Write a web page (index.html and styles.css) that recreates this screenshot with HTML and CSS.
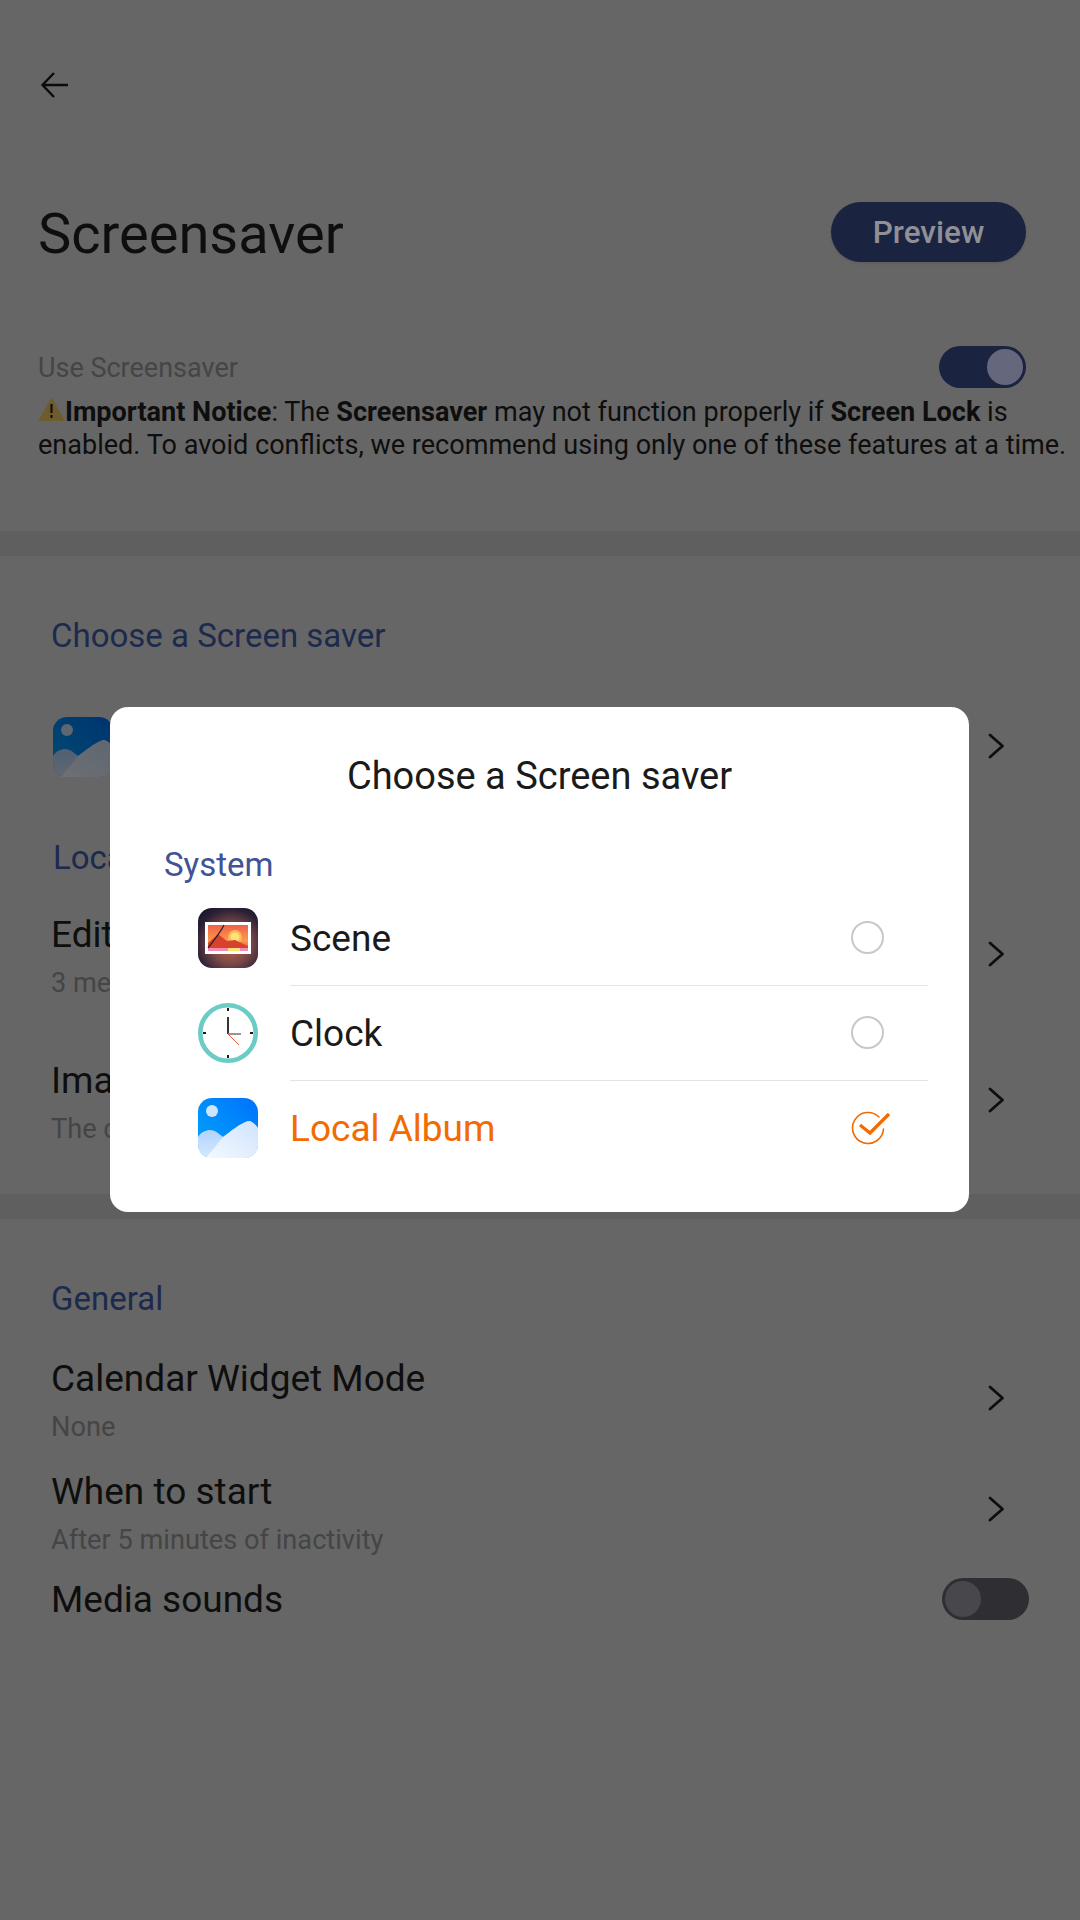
FILE: index.html
```html
<!DOCTYPE html>
<html lang="en">
<head>
    <meta charset="UTF-8">
    <meta name="viewport" content="width=device-width, initial-scale=1.0">
    <title>Screensaver</title>
    <link rel="stylesheet" href="styles.css">
</head>
<body>

    <svg class="defs" width="0" height="0">
        <defs>
            <linearGradient id="albumSky" x1="0" y1="1" x2="1" y2="0">
                <stop offset="0" stop-color="#00a6fb"/>
                <stop offset="1" stop-color="#0072fa"/>
            </linearGradient>
            <linearGradient id="albumHill" x1="0" y1="0" x2="0" y2="1">
                <stop offset="0" stop-color="#a6cdfd"/>
                <stop offset="1" stop-color="#d6e8fe"/>
            </linearGradient>
            <linearGradient id="albumPeak" x1="1" y1="0" x2="0" y2="1">
                <stop offset="0" stop-color="#cfe3fd"/>
                <stop offset="1" stop-color="#f4f9ff"/>
            </linearGradient>
            <radialGradient id="sceneBack" cx=".55" cy=".6" r=".72">
                <stop offset="0" stop-color="#c0693f"/>
                <stop offset=".45" stop-color="#7d4a48"/>
                <stop offset=".8" stop-color="#2c2138"/>
                <stop offset="1" stop-color="#1a1628"/>
            </radialGradient>
            <linearGradient id="sceneSky" x1="0" y1="0" x2="0" y2="1">
                <stop offset="0" stop-color="#f0604a"/>
                <stop offset=".6" stop-color="#fb9a4c"/>
                <stop offset="1" stop-color="#e8503c"/>
            </linearGradient>
            <symbol id="album" viewBox="0 0 60 60">
                <rect width="60" height="60" rx="14" fill="url(#albumSky)"/>
                <circle cx="14" cy="13" r="6" fill="#cfe4fd"/>
                <path d="M0 39C3 34 8 32 12 32C18 32 21 36 25 39L50 23C54 23 57 26 60 30V46C60 54 54 60 46 60H14C6 60 0 54 0 46Z" fill="url(#albumHill)"/>
                <path d="M8 60L25 39C33 33 41 26 50 23C54 23 57 26 60 30V46C60 54 54 60 46 60Z" fill="url(#albumPeak)"/>
            </symbol>
            <symbol id="chevron" viewBox="0 0 24 30">
                <path d="M5 4L17.500 15L5 26" fill="none" stroke="currentColor" stroke-width="2.800" stroke-linecap="round" stroke-linejoin="round"/>
            </symbol>
        </defs>
    </svg>

    <main class="page">
        <svg class="back" viewBox="0 0 30 30"><path d="M28 15H3M14 3L2.500 15L14 27" fill="none" stroke="#0b0b0b" stroke-width="2.400"/></svg>

        <div class="head">
            <h1>Screensaver</h1>
            <span class="preview">Preview</span>
        </div>

        <div class="use">
            <span class="use-label">Use Screensaver</span>
            <span class="toggle toggle-on"><i></i></span>
        </div>
        <p class="notice"><svg class="warn" viewBox="0 0 26 24"><path d="M13 0L26 24H0Z" fill="#6f5c2d"/><path d="M13 7V16M13 18V21" stroke="#111" stroke-width="2.200"/></svg><b>Important Notice</b>: The <b>Screensaver</b> may not function properly if <b>Screen Lock</b> is enabled. To avoid conflicts, we recommend using only one of these features at a time.</p>

        <div class="bar bar-first"></div>

        <h2 class="section section-saver">Choose a Screen saver</h2>
        <div class="saver">
            <svg class="app-icon dim"><use href="#album"/></svg>
            <svg class="chevron"><use href="#chevron"/></svg>
        </div>

        <h2 class="section section-local">Local Album</h2>
        <div class="row row-edit">
            <div>
                <div class="row-title">Edit Album</div>
                <div class="row-sub">3 media selected</div>
            </div>
            <svg class="chevron"><use href="#chevron"/></svg>
        </div>
        <div class="row row-image">
            <div>
                <div class="row-title">Image duration</div>
                <div class="row-sub">The duration of each image</div>
            </div>
            <svg class="chevron"><use href="#chevron"/></svg>
        </div>

        <div class="bar bar-second"></div>

        <h2 class="section section-general">General</h2>
        <div class="row row-calendar">
            <div>
                <div class="row-title">Calendar Widget Mode</div>
                <div class="row-sub">None</div>
            </div>
            <svg class="chevron"><use href="#chevron"/></svg>
        </div>
        <div class="row row-start">
            <div>
                <div class="row-title">When to start</div>
                <div class="row-sub">After 5 minutes of inactivity</div>
            </div>
            <svg class="chevron"><use href="#chevron"/></svg>
        </div>
        <div class="row row-media">
            <div class="row-title">Media sounds</div>
            <span class="toggle toggle-off"><i></i></span>
        </div>
    </main>

    <div class="dialog">
        <h3>Choose a Screen saver</h3>
        <div class="dialog-label">System</div>

        <div class="option">
            <svg class="app-icon" viewBox="0 0 60 60">
                <rect width="60" height="60" rx="14" fill="url(#sceneBack)"/>
                <rect x="7" y="14" width="46" height="32" fill="#fff"/>
                <rect x="10" y="17" width="40" height="26" fill="url(#sceneSky)"/>
                <circle cx="37" cy="29" r="7" fill="#fdb85a"/>
                <circle cx="37" cy="29" r="4.500" fill="#fde27a"/>
                <path d="M10 35L20 26L29 33L37 32L50 38V43H10Z" fill="#d9412f"/>
                <path d="M10 40H50V43H10Z" fill="#f58bb0"/>
                <path d="M30 40H42V43H30Z" fill="#fde27a"/>
                <path d="M10 40C15 33 21 27 26 17" fill="none" stroke="#20202c" stroke-width="1.200"/>
            </svg>
            <div class="option-body">
                <span>Scene</span>
                <i class="radio"></i>
            </div>
        </div>

        <div class="option">
            <svg class="app-icon" viewBox="0 0 60 60">
                <circle cx="30" cy="30" r="27.700" fill="#fff" stroke="#6bccc5" stroke-width="4.600"/>
                <path d="M30 5V8M30 52V55M5 30H8M52 30H55" stroke="#1a1a1a" stroke-width="2"/>
                <path d="M30 14V31" stroke="#1e1e1e" stroke-width="1.800"/>
                <path d="M30 31H43" stroke="#8a8a8a" stroke-width="1.800"/>
                <path d="M30 31L41 42" stroke="#ee5a3c" stroke-width="1"/>
            </svg>
            <div class="option-body">
                <span>Clock</span>
                <i class="radio"></i>
            </div>
        </div>

        <div class="option option-active">
            <svg class="app-icon"><use href="#album"/></svg>
            <div class="option-body">
                <span>Local Album</span>
                <svg class="check" viewBox="0 0 40 34">
                    <path d="M28 6A15.500 15.500 0 1 0 32.500 18" fill="none" stroke="#f26a00" stroke-width="1.600" stroke-linecap="round"/>
                    <path d="M9 14L19 22L38 3" fill="none" stroke="#f26a00" stroke-width="3.200"/>
                </svg>
            </div>
        </div>
    </div>

</body>
</html>
```

FILE: styles.css
```css
* {
    box-sizing: border-box;
}
html, body {
    margin: 0;
    height: 100%;
}
body {
    position: relative;
    background-color: #666666;
    color: #0e0e0e;
    font-family: Roboto, "Liberation Sans", sans-serif;
    overflow: hidden;
}
.defs {
    position: absolute;
}
.page {
    height: 1920px;
}

.back {
    display: block;
    width: 30px;
    height: 30px;
    margin: 70px 0 0 40px;
}
.head {
    display: flex;
    justify-content: space-between;
    align-items: center;
    height: 60px;
    margin-top: 102px;
    padding: 0 54px 0 38px;
}
h1 {
    margin: 4px 0 0;
    font-size: 56px;
    font-weight: 400;
}
.preview {
    display: flex;
    align-items: center;
    justify-content: center;
    width: 195px;
    height: 60px;
    padding-top: 1px;
    border-radius: 30px;
    background-color: #1a2440;
    box-shadow: 0 1px 3px rgba(0, 0, 0, .12);
    color: #909096;
    font-size: 31.500px;
    font-weight: 500;
}

.use {
    display: flex;
    justify-content: space-between;
    align-items: center;
    height: 42px;
    margin-top: 84px;
    padding: 0 54px 0 38px;
    color: #454545;
    font-size: 27px;
}
.use-label {
    margin-top: 2px;
}
.toggle {
    display: block;
    width: 87px;
    height: 42px;
    border-radius: 21px;
}
.toggle i {
    display: block;
    width: 36px;
    height: 36px;
    margin: 3px;
    border-radius: 50%;
}
.toggle-on {
    background-color: #1a2440;
}
.toggle-on i {
    margin-left: 48px;
    background-color: #65687c;
}
.toggle-off {
    margin-bottom: 2px;
    background-color: #2e2e33;
}
.toggle-off i {
    background-color: #47474c;
}
.notice {
    margin: 8px 0 0;
    padding: 0 8px 0 38px;
    font-size: 27.060px;
    line-height: 33px;
    color: #0e0e0e;
}
.warn {
    width: 27px;
    height: 24px;
}

.bar {
    height: 25px;
    background-color: #5f5f5f;
}
.bar-first {
    margin-top: 69px;
}
.bar-second {
    margin-top: 49px;
}

.section {
    margin: 0;
    padding-left: 51px;
    color: #1c2a4d;
    font-size: 33px;
    font-weight: 400;
    line-height: 40px;
}
.section-saver {
    margin-top: 60px;
}
.section-local {
    margin-top: 61px;
    padding-left: 53px;
}
.section-general {
    margin-top: 60px;
}

.saver {
    display: flex;
    justify-content: space-between;
    align-items: center;
    height: 60px;
    margin-top: 61px;
    padding: 0 71px 0 53px;
}
.saver .chevron {
    margin-bottom: 2px;
}
.app-icon {
    display: block;
    width: 60px;
    height: 60px;
    flex: none;
}
.dim {
    filter: brightness(.45);
}

.row {
    display: flex;
    justify-content: space-between;
    align-items: center;
    padding: 0 71px 0 51px;
}
.row .chevron {
    margin-bottom: 5px;
}
.row-start .chevron {
    margin-bottom: 8px;
}
.row-title {
    font-size: 37px;
    line-height: 44px;
}
.row-sub {
    margin-top: 10px;
    color: #454545;
    font-size: 27.200px;
    line-height: 32px;
}
.row-edit {
    margin-top: 35px;
}
.row-image {
    margin-top: 60px;
}
.row-calendar {
    margin-top: 38px;
}
.row-start {
    margin-top: 27px;
}
.row-media {
    margin-top: 22px;
    padding-right: 51px;
}
.chevron {
    width: 24px;
    height: 30px;
    color: #0e0e0e;
}

.dialog {
    position: absolute;
    left: 110px;
    top: 707px;
    width: 859px;
    height: 505px;
    padding: 0 41px 0 54px;
    border-radius: 18px;
    background-color: #ffffff;
    color: #1a1a1a;
}
.dialog h3 {
    margin: 47px 0 0 -54px;
    width: 859px;
    text-align: center;
    font-size: 38px;
    font-weight: 400;
    line-height: 44px;
}
.dialog-label {
    margin-top: 47px;
    color: #3f5396;
    font-size: 33px;
    line-height: 40px;
}
.option {
    display: flex;
    align-items: center;
    height: 95px;
    padding-left: 34px;
    font-size: 37px;
}
.dialog-label + .option {
    margin-top: 5px;
}
.option .app-icon {
    margin-right: 32px;
}
.option-body {
    flex: 1;
    display: flex;
    justify-content: space-between;
    align-items: center;
    align-self: flex-start;
    height: 95px;
    margin-top: 1px;
    padding-right: 44px;
    border-bottom: 1px solid #e4e4e4;
}
.radio {
    display: block;
    width: 33px;
    height: 33px;
    margin-bottom: 2px;
    border: 2px solid #c8c8c8;
    border-radius: 50%;
}
.option-active {
    color: #f26a00;
}
.option-active .option-body {
    border-bottom: none;
    padding-right: 37px;
}
.check {
    width: 40px;
    height: 34px;
    margin-bottom: 2px;
}
```
